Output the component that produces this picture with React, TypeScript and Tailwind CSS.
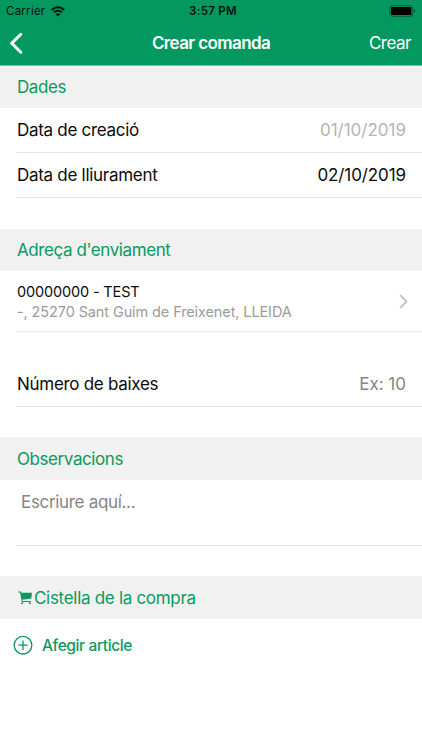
import type { ReactNode } from "react";

/* ================= ICONS ================= */
function WifiIcon() {
  return (
    <svg width="14" height="11" viewBox="0 0 14 11" className="ml-[6px]" fill="none">
      <path d="M0.7 4C4.3 0.4 9.7 0.4 13.3 4" stroke="#06140d" strokeWidth="2" />
      <path d="M2.9 6.4C5.3 4.1 8.7 4.1 11.1 6.4" stroke="#06140d" strokeWidth="1.8" />
      <path d="M7 10.6L4.7 8.2C6 6.9 8 6.9 9.3 8.2Z" fill="#06140d" />
    </svg>
  );
}

function BatteryIcon() {
  return (
    <svg width="27" height="12" viewBox="0 0 27 12">
      <rect x="0.7" y="0.7" width="23.2" height="10.6" rx="2.6" fill="none" stroke="#045c3b" strokeWidth="1" />
      <rect x="2" y="2" width="20.4" height="8" rx="1" fill="#000" />
      <path d="M25.2 4C26.6 4.4 26.6 7.6 25.2 8Z" fill="#045c3b" />
    </svg>
  );
}

function CartIcon() {
  return (
    <svg width="15" height="14" viewBox="0 0 15 14" fill="#0a995f">
      <path d="M1.2 0.4H3.8L4.3 1.7H15L14.3 7.4L5.3 8.8L5.6 10H13.8V10.9H4.8L3.1 1.4H1.4Z" />
      <circle cx="5.1" cy="12.3" r="1" />
      <circle cx="12.8" cy="12.3" r="1" />
    </svg>
  );
}

/* ================= LIST PARTS ================= */
function SectionTitle({ className = "h-[42px]", children }: { className?: string; children: ReactNode }) {
  return (
    <h2
      className={`${className} flex items-center bg-[#f1f1f1] pl-[17px] text-[17px] leading-6 tracking-[-0.42px] text-[#0a995f]`}
    >
      {children}
    </h2>
  );
}

function Row({ label, children }: { label: string; children: ReactNode }) {
  return (
    <div className="ml-4 flex h-[45px] items-center justify-between border-b border-[#e6e6e6] pr-4 pl-px text-[17px] leading-6">
      <span className="tracking-[-0.29px]">{label}</span>
      {children}
    </div>
  );
}

export default function App() {
  return (
    <div className="h-[750px] w-[422px] overflow-hidden bg-white font-['Inter',sans-serif] whitespace-nowrap text-[#0b0b0b]">
      {/* ================= HEADER ================= */}
      <header className="h-[66px] border-b border-[#72c2a2] bg-[#02985f] text-white">
        <div className="grid h-[22px] grid-cols-3 items-center pr-[6px] pl-[6px] text-[#06140d]">
          <div className="flex items-center pt-px">
            <span className="text-[11.5px] tracking-[0.25px]">Carrier</span>
            <WifiIcon />
          </div>
          <span className="pt-px pl-1 text-center text-[11.5px] font-semibold tracking-[0.3px]">3:57 PM</span>
          <div className="flex justify-end">
            <BatteryIcon />
          </div>
        </div>
        <div className="grid h-[43px] grid-cols-[100px_1fr_100px] items-center pr-[11px] pl-[9px]">
          <button aria-label="Back">
            <svg width="14" height="22" viewBox="0 0 14 22" fill="none" stroke="#fff" strokeWidth="3">
              <path d="M11.8 1.2L2.8 10.2L11.8 19.2" strokeLinecap="round" />
            </svg>
          </button>
          <h1 className="pl-[2px] text-center text-[17px] font-semibold tracking-[-0.6px]">Crear comanda</h1>
          <button className="text-right text-[17px] tracking-[-0.5px]">Crear</button>
        </div>
      </header>

      {/* ================= DATES ================= */}
      <SectionTitle>Dades</SectionTitle>
      <Row label="Data de creació">
        <span className="text-[#b5b5b5]">01/10/2019</span>
      </Row>
      <Row label="Data de lliurament">
        <span className="tracking-[-0.1px]">02/10/2019</span>
      </Row>

      {/* ================= ADDRESS ================= */}
      <div className="mt-[31px]">
        <SectionTitle>Adreça d'enviament</SectionTitle>
      </div>
      <div className="ml-4 flex h-[61px] items-center justify-between border-b border-[#e6e6e6] pr-[14px] pl-px">
        <div className="pt-[2px]">
          <p className="text-[14.5px] leading-5 tracking-[-0.15px]">00000000 - TEST</p>
          <p className="text-[14.5px] leading-5 tracking-[-0.11px] text-[#9b9b9b]">
            -, 25270 Sant Guim de Freixenet, LLEIDA
          </p>
        </div>
        <svg width="9" height="15" viewBox="0 0 9 15" fill="none" stroke="#bcbcbc" strokeWidth="1.8">
          <path d="M1.2 1L7.4 7.5L1.2 14" />
        </svg>
      </div>
      <div className="mt-[30px]">
        <Row label="Número de baixes">
          <span className="text-[#858585]">Ex: 10</span>
        </Row>
      </div>

      {/* ================= NOTES ================= */}
      <div className="mt-[30px]">
        <SectionTitle className="h-[43px] pt-px">Observacions</SectionTitle>
      </div>
      <div className="ml-4 h-[66px] border-b border-[#e6e6e6] pt-[10px] pl-[5px] text-[17px] leading-[25px] tracking-[-0.32px] text-[#858585]">
        Escriure aquí...
      </div>

      {/* ================= BASKET ================= */}
      <div className="mt-[30px]">
        <SectionTitle className="h-[43px] pt-px">
          <CartIcon />
          <span className="ml-[2px] tracking-[-0.3px]">Cistella de la compra</span>
        </SectionTitle>
      </div>
      <button className="flex h-[53px] items-center pl-[13px] text-[15.5px] font-medium tracking-[-0.38px] text-[#0a995f]">
        <svg width="20" height="20" viewBox="0 0 20 20" fill="none" stroke="#0a995f" strokeWidth="1.3">
          <circle cx="10" cy="9.2" r="8.8" />
          <path d="M10 4.5V13.9M5.3 9.2H14.7" />
        </svg>
        <span className="ml-[9px]">Afegir article</span>
      </button>
    </div>
  );
}
